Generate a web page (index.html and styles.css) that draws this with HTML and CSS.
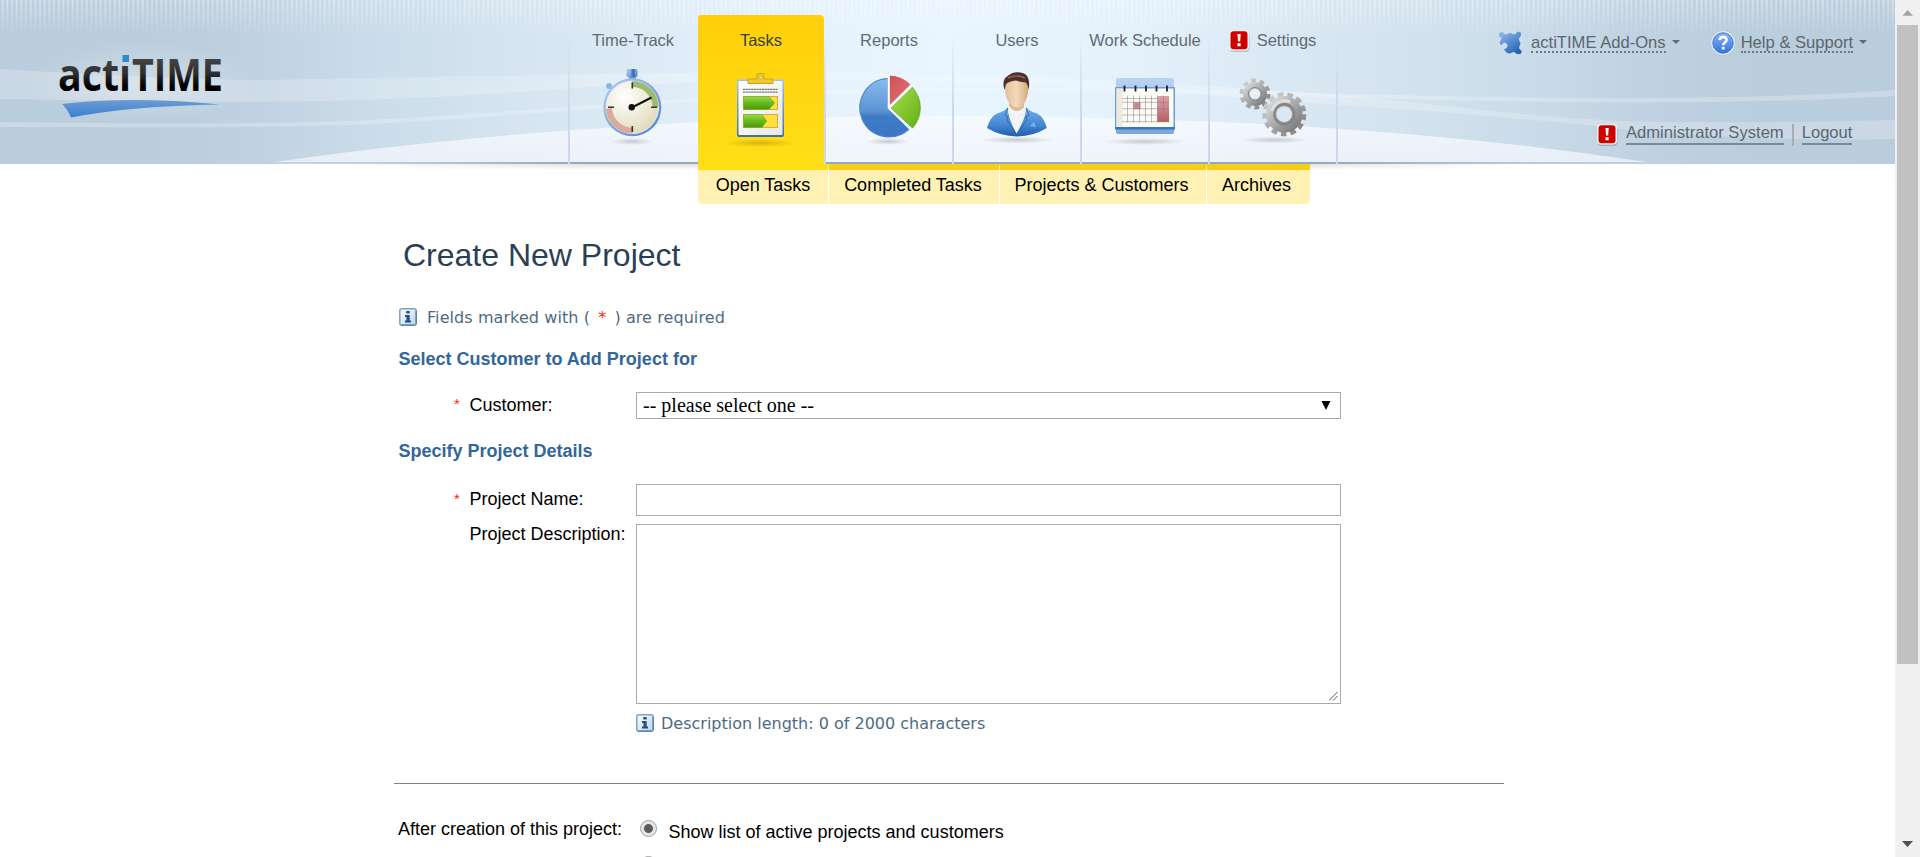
FILE: index.html
```html
<!DOCTYPE html>
<html lang="en">
<head>
<meta charset="utf-8">
<title>actiTIME - Create New Project</title>
<link rel="stylesheet" href="styles.css">
</head>
<body>
<div class="viewport">
<div class="page">
  <header class="header">
    <svg class="header-bg" width="1895" height="172" viewBox="0 0 1895 172">
      <defs>
        <linearGradient id="sky"><stop offset="0" stop-color="#bacddd"/><stop offset=".09" stop-color="#bbcedd"/><stop offset=".14" stop-color="#c1d2e2"/><stop offset=".2" stop-color="#cbddea"/><stop offset=".3" stop-color="#d9e7f3"/><stop offset=".4" stop-color="#e4f1fc"/><stop offset=".5" stop-color="#e9f5ff"/><stop offset=".6" stop-color="#e4f1fb"/><stop offset=".7" stop-color="#d8e6f2"/><stop offset=".8" stop-color="#cbddea"/><stop offset=".86" stop-color="#c1d2e2"/><stop offset=".92" stop-color="#bbcedd"/><stop offset="1" stop-color="#bacddd"/></linearGradient>
        <linearGradient id="hill" x1="0" y1="0" x2="0" y2="1"><stop offset="0" stop-color="#f7fbff" stop-opacity=".85"/><stop offset="1" stop-color="#f3f5fa" stop-opacity=".75"/></linearGradient>
        <linearGradient id="edge"><stop offset="0" stop-color="#94aabd" stop-opacity="0"/><stop offset=".16" stop-color="#94aabd" stop-opacity="0"/><stop offset=".3" stop-color="#94aabd"/><stop offset=".7" stop-color="#94aabd"/><stop offset=".87" stop-color="#94aabd" stop-opacity="0"/><stop offset="1" stop-color="#94aabd" stop-opacity="0"/></linearGradient>
        <linearGradient id="drop" x1="0" y1="0" x2="0" y2="1"><stop offset="0" stop-color="#000" stop-opacity=".12"/><stop offset="1" stop-color="#000" stop-opacity="0"/></linearGradient>
        <linearGradient id="fade"><stop offset=".18" stop-color="#000"/><stop offset=".31" stop-color="#fff"/><stop offset=".69" stop-color="#fff"/><stop offset=".8" stop-color="#000"/></linearGradient>
        <linearGradient id="down" x1="0" y1="0" x2="0" y2="1"><stop offset="0" stop-color="#fff" stop-opacity=".38"/><stop offset="1" stop-color="#fff" stop-opacity="0"/></linearGradient>
        <pattern id="stripe" width="4.667" height="40" patternUnits="userSpaceOnUse"><rect x="1.5" width="2.3" height="34" fill="url(#down)"/></pattern>
        <mask id="m"><rect width="1895" height="172" fill="url(#fade)"/></mask>
        <radialGradient id="halo"><stop offset="0" stop-color="#fff" stop-opacity=".28"/><stop offset="1" stop-color="#fff" stop-opacity="0"/></radialGradient>
      </defs>
      <rect width="1895" height="164" fill="url(#sky)"/>
      <rect width="1895" height="34" fill="url(#stripe)"/>
      <path d="M0 69C100 75 180 79 250 80C350 79 450 76 560 75C700 72 800 72 900 74C1050 76 1200 84 1340 95C1450 104 1560 124 1700 122C1770 123 1840 121 1895 120V139C1800 141 1700 137 1620 129C1540 119 1440 112 1340 105C1200 94 1050 84 900 81C780 79 660 83 560 89C450 97 360 102 220 102C120 101 60 100 0 99Z" fill="#fff" fill-opacity=".22"/>
      <path d="M0 122C120 124 250 124 350 121C450 116 600 104 700 98C820 90 950 86 1080 88C1200 90 1300 93 1400 95C1560 99 1740 101 1895 90V96C1740 105 1560 103 1400 99C1300 96 1200 93 1080 91C950 89 820 93 700 101C600 108 450 121 350 125C250 128 120 127 0 127Z" fill="#fff" fill-opacity=".24"/>
      <path d="M275 162Q395 144 560 131C680 122 800 116 940 116C1080 117 1220 120 1340 129Q1500 140 1647 162Z" fill="url(#hill)"/>
      <rect y="162" width="1895" height="2" fill="url(#edge)"/>
      <rect y="164" width="1895" height="6" fill="url(#drop)" mask="url(#m)"/>
      <ellipse cx="140" cy="82" rx="115" ry="42" fill="url(#halo)"/>
    </svg>
    <div class="brand">
      <svg class="logo" width="200" height="110" viewBox="0 0 200 110" role="img" aria-label="actiTIME">
        <defs>
          <linearGradient id="ink" gradientUnits="userSpaceOnUse" x1="0" y1="39" x2="0" y2="71"><stop offset="0" stop-color="#444"/><stop offset=".45" stop-color="#2e2e2e"/><stop offset=".85" stop-color="#000"/></linearGradient>
          <linearGradient id="swoosh" x1="0" y1="0" x2="0" y2="1"><stop offset="0" stop-color="#6d9bd2"/><stop offset="1" stop-color="#377fd2"/></linearGradient>
        </defs>
        <text class="logo-text" x="18" y="71" textLength="73" lengthAdjust="spacingAndGlyphs" fill="url(#ink)">actı</text>
        <text class="logo-text" x="92" y="71" textLength="91" lengthAdjust="spacingAndGlyphs" fill="url(#ink)">TIME</text>
        <rect x="82.500" y="35" width="6.500" height="7" fill="#2e8bcb"/>
        <path d="M22 84Q90 76 180 84.500Q90 86 31 97.500Q28 90 22 84Z" fill="url(#swoosh)"/>
      </svg>
    </div>
    <nav class="tabs">
      <a class="tab"><span class="tab-label">Time-Track</span>
        <svg width="126" height="92" viewBox="0 0 126 92">
          <defs>
            <radialGradient id="shade"><stop offset="0" stop-color="#000" stop-opacity=".18"/><stop offset="1" stop-color="#000" stop-opacity="0"/></radialGradient>
            <radialGradient id="dial" cx=".35" cy=".3" r=".8"><stop offset="0" stop-color="#fff"/><stop offset="1" stop-color="#ddd9b4"/></radialGradient>
            <linearGradient id="rim" x1="0" y1="0" x2="1" y2="1"><stop offset="0" stop-color="#b4d0f5"/><stop offset="1" stop-color="#4d80c8"/></linearGradient>
          </defs>
          <ellipse cx="62" cy="81.500" rx="22" ry="3.500" fill="url(#shade)"/>
          <rect x="59" y="15" width="7" height="5" fill="#6a92c8"/>
          <rect x="56.500" y="9" width="11" height="8" rx="1.500" fill="url(#rim)"/><path d="M61.500 9h3.500v8h-3.500z" fill="#3f74b8"/>
          <path d="M39 25l4 5" stroke="#8fb4e6" stroke-width="4"/><circle cx="39" cy="26" r="3" fill="#8fb5e8"/>
          <circle cx="62.300" cy="47.300" r="29" fill="url(#rim)"/><circle cx="62.300" cy="47.300" r="26.300" fill="url(#dial)" stroke="#e8eef6"/>
          <path d="M62.300 24A23.300 23.300 0 0 1 85.600 47.300" fill="none" stroke="#9dba70" stroke-width="6"/>
          <path d="M62.300 70.600A23.300 23.300 0 0 1 39 48.500" fill="none" stroke="#dca99a" stroke-width="6"/>
          <path d="M62.300 22.500v6M62.300 66v6M38 47.300h6M81 47.300h6" stroke="#333" stroke-width="1.600"/>
          <path d="M60 48.500L81.500 37.500" stroke="#111" stroke-width="2"/><circle cx="61.700" cy="47.300" r="3.200" fill="#111"/>
        </svg></a>
      <a class="tab tab-active"><span class="tab-label">Tasks</span>
        <svg width="126" height="92" viewBox="0 0 126 92">
          <defs>
            <linearGradient id="bar" x1="0" y1="0" x2="0" y2="1"><stop offset="0" stop-color="#9bdc4c"/><stop offset=".5" stop-color="#66ba1a"/><stop offset="1" stop-color="#47980c"/></linearGradient>
            <linearGradient id="board" x1="0" y1="0" x2="0" y2="1"><stop offset="0" stop-color="#9fc3ec"/><stop offset="1" stop-color="#3f6da5"/></linearGradient>
            <linearGradient id="sheet" x1="0" y1="0" x2="1" y2="1"><stop offset="0" stop-color="#fff"/><stop offset="1" stop-color="#e9e9e2"/></linearGradient>
          </defs>
          <ellipse cx="62" cy="83" rx="36" ry="4" fill="url(#shade)"/>
          <rect x="39" y="19.500" width="47" height="57.500" rx="2" fill="url(#board)"/><rect x="40.500" y="21" width="44" height="54" rx="1" fill="url(#sheet)"/>
          <path d="M50 19h9v-4.500q0-1 1-1h5q1 0 1 1v4.500h9v4.500H50z" fill="#edc937" stroke="#d0a31c"/><circle cx="62.500" cy="17.500" r="1.500" fill="#fff3a0" stroke="#c79d1c" stroke-width=".7"/>
          <path d="M45 29.300h35M45 32.200h35" stroke="#777" stroke-width="1.200" stroke-dasharray="2.200 .5"/>
          <rect x="45.500" y="36.500" width="34" height="13" fill="#ffdf3b" stroke="#cfae3e"/><path d="M45.500 36.500H71L76.500 43L71 49.500H45.500z" fill="url(#bar)" stroke="#8ea832" stroke-width=".8"/>
          <rect x="45.500" y="54.500" width="34" height="13" fill="#ffdf3b" stroke="#cfae3e"/><path d="M45.500 54.500H64L68.700 61L64 67.500H45.500z" fill="url(#bar)" stroke="#8ea832" stroke-width=".8"/>
        </svg></a>
      <a class="tab"><span class="tab-label">Reports</span>
        <svg width="126" height="92" viewBox="0 0 126 92">
          <defs>
            <linearGradient id="pieb" x1="0" y1="0" x2="0" y2="1"><stop offset="0" stop-color="#8bbbf0"/><stop offset=".55" stop-color="#5b94d6"/><stop offset=".65" stop-color="#3f7cc6"/><stop offset="1" stop-color="#3a76c4"/></linearGradient>
            <linearGradient id="pier" x1="0" y1="0" x2="1" y2="1"><stop offset="0" stop-color="#cf5158"/><stop offset="1" stop-color="#e07678"/></linearGradient>
            <linearGradient id="pieg" x1="0" y1="0" x2="1" y2="1"><stop offset="0" stop-color="#a9e04e"/><stop offset="1" stop-color="#62ad13"/></linearGradient>
          </defs>
          <ellipse cx="62" cy="81.500" rx="22" ry="3.500" fill="url(#shade)"/>
          <path d="M62 48V18.500A29.200 29.200 0 1 0 83.500 68.500Z" fill="url(#pieb)" stroke="#4d85cb" stroke-width="1.200"/>
          <path d="M63.300 46V15A31 31 0 0 1 85 24.600Z" fill="url(#pier)" stroke="#fff" stroke-width=".8"/>
          <path d="M65 48L86 27A30 30 0 0 1 86.500 68Z" fill="url(#pieg)" stroke="#55a00e" stroke-width=".7"/>
          <path d="M62.500 16V48L84 69M63 48.300L86 26" stroke="#fff" fill="none" stroke-width="1.700"/>
        </svg></a>
      <a class="tab"><span class="tab-label">Users</span>
        <svg width="126" height="92" viewBox="0 0 126 92">
          <defs>
            <linearGradient id="suit" x1="0" y1="0" x2="0" y2="1"><stop offset="0" stop-color="#72b0f0"/><stop offset=".6" stop-color="#4587d2"/><stop offset="1" stop-color="#1f5fae"/></linearGradient>
            <linearGradient id="skin"><stop offset="0" stop-color="#dfc19d"/><stop offset=".5" stop-color="#f3d9ba"/><stop offset="1" stop-color="#d3ac80"/></linearGradient>
          </defs>
          <ellipse cx="63" cy="80" rx="37" ry="3.500" fill="url(#shade)"/>
          <path d="M55 40h15v14l-7 8l-8-8z" fill="#e0bb91"/>
          <path d="M53.500 48L62 71L72.500 48L71 46Q63 56 55 46Z" fill="#f2f6f8"/>
          <path d="M54 47Q53 55 62.500 74Q73 55 72 47Q75 51 83 53.500Q90 57 92.800 68Q80 76 63 76.500Q46 76 33 68Q36 57 43 53.500Q51 51 54 47Z" fill="url(#suit)"/>
          <path d="M54.500 49Q57 53 60.500 54L62.500 71L65 54Q69 53 71.500 49Q72 57 62.500 73Q53.500 57 54.500 49Z" fill="#eef3f6"/>
          <path d="M54 48l-3 7 3 2-1 3 9.500 14M72 48l3 7-3 2 1 3-10.500 14" fill="none" stroke="#2f68ad" stroke-width=".9"/>
          <path d="M76 66l4-4 2 5z" fill="#7db2ea"/>
          <path d="M51 25Q51 18 62 18Q74 18 74 26Q75 38 69 45Q63 50 57 45Q50 38 51 25Z" fill="url(#skin)"/>
          <path d="M50.500 30Q47.500 20 53 16.500Q60 10 70 13.500Q77 17 74.500 30Q74 25 72 22.500Q66 22 62 20.500Q55 21 52 24Z" fill="#4e302b"/>
          <path d="M54 18Q63 14 71 18" stroke="#8c655d" fill="none" stroke-width="1.600"/>
        </svg></a>
      <a class="tab"><span class="tab-label">Work Schedule</span>
        <svg width="126" height="92" viewBox="0 0 126 92">
          <defs>
            <linearGradient id="cal" x1="0" y1="0" x2="0" y2="1"><stop offset="0" stop-color="#b9d5f3"/><stop offset="1" stop-color="#7aa7da"/></linearGradient>
            <linearGradient id="redcol" x1="0" y1="0" x2="0" y2="1"><stop offset="0" stop-color="#dba2a8"/><stop offset="1" stop-color="#bd5c62"/></linearGradient>
          </defs>
          <ellipse cx="63" cy="81.500" rx="42" ry="3.500" fill="url(#shade)"/>
          <rect x="34" y="18" width="58" height="56" rx="2" fill="url(#cal)"/>
          <rect x="33" y="27" width="60" height="42" rx="1" fill="#6e9bd2"/><path d="M33 67h60v2.500H33z" fill="#4275b3"/><rect x="34.500" y="28.500" width="57" height="38.500" fill="#fafaf7"/>
          <path d="M34.500 28.500h6v38.500h-6z" fill="#eceadc"/>
          <rect x="75.300" y="36" width="11.700" height="26" fill="url(#redcol)"/><rect x="51.500" y="42.300" width="7" height="7" fill="#cf868c"/>
          <path d="M40 38.500h35M40 42.300h47M40 48.700h47M40 55h47M40 61.700h47M45.500 35.500v27M51.500 35.500v27M57.500 35.500v27M63.500 35.500v27M69.500 35.500v27M75.500 35.500v27M81.500 35.500v27" stroke="#8d7f80" stroke-width=".8" stroke-opacity=".65"/>
          <path d="M42.500 25.500v6M53.500 25.500v6M64 25.500v6M74.500 25.500v6M85 25.500v6" stroke="#222" stroke-width="1.800"/>
        </svg></a>
      <a class="tab"><span class="tab-label"><svg class="alert" width="22" height="24" viewBox="0 0 22 24"><rect x="1.500" y="3" width="20" height="20" rx="4" fill="#000" opacity=".18"/><rect x="1" y="1" width="20" height="20.500" rx="4" fill="#f6f3f3"/><rect x="2.500" y="2.300" width="17" height="18" rx="3" fill="#cf0000"/><path d="M9.500 5h3.200l-.5 7.500h-2.200zM9.500 14.200h3.200v3h-3.200z" fill="#fff"/></svg>Settings</span>
        <svg width="126" height="92" viewBox="0 0 126 92">
          <defs><linearGradient id="steel" x1="0" y1="0" x2="1" y2="1"><stop offset="0" stop-color="#d6d6d6"/><stop offset="1" stop-color="#7c7c7c"/></linearGradient></defs>
          <ellipse cx="64" cy="80" rx="34" ry="3.500" fill="url(#shade)"/>
          <g fill="none" stroke="url(#steel)">
            <circle cx="45" cy="34" r="13.500" stroke-width="4" stroke-dasharray="4.700 3.782"/>
            <circle cx="45" cy="34" r="8.700" stroke-width="6.500"/>
            <circle cx="74.300" cy="54.300" r="19.800" stroke-width="4.500" stroke-dasharray="5.600 3.970"/>
            <circle cx="74.300" cy="54.300" r="13" stroke-width="10.500"/>
          </g>
          <circle cx="45" cy="34" r="6.500" fill="none" stroke="#888" stroke-width="1"/>
          <circle cx="74.300" cy="54.300" r="10" fill="none" stroke="#858585" stroke-width="2.400"/>
          <path d="M62 51A13 13 0 0 1 80 42" fill="none" stroke="#e0e0e0" stroke-width="3"/>
        </svg></a>
      <span class="tab-end"></span>
    </nav>
    <div class="tools">
      <div class="tool-row tool-top">
        <svg class="puzzle" width="26" height="26" viewBox="0 0 26 26">
          <defs><linearGradient id="pz" x1="0" y1="0" x2=".7" y2="1"><stop offset="0" stop-color="#9cc0f0"/><stop offset=".5" stop-color="#5f92d4"/><stop offset="1" stop-color="#2562ad"/></linearGradient></defs>
          <path d="M4 1.500Q7 1 7.500 3.500Q9 4.500 10.500 3.500Q13 1 16 3.500Q17.500 4.500 18.500 3.500Q19 .8 22 1Q25.500 2 24.500 5Q24 7 22.500 8Q22 9.500 23 11Q25 13.500 23 16Q22 17.500 23 19Q25.500 20 25 22.500Q24 25.500 21 24.500Q19 24.500 18 23Q16.500 22 15 23Q12.500 25 9.500 23L5.500 18.500Q9 19.500 10 16.500Q10.500 13.500 7.500 13Q5 13.500 5.500 16.500L3 14.500Q1 12.500 3 10.500Q4.500 9 3.500 7.500Q1.500 7 1.200 5Q1.200 2 4 1.500Z" fill="url(#pz)" stroke="#dfeaf5" stroke-width=".8"/>
        </svg>
        <a class="dotted">actiTIME Add-Ons</a><i class="caret"></i>
        <svg class="help" width="24" height="24" viewBox="0 0 24 24">
          <defs><linearGradient id="hp" x1="0" y1="0" x2="0" y2="1"><stop offset="0" stop-color="#8fb6f2"/><stop offset="1" stop-color="#2f70e2"/></linearGradient></defs>
          <circle cx="12" cy="12" r="11" fill="url(#hp)" stroke="#e5eefb" stroke-width="1.500"/><circle cx="12" cy="12" r="10.200" fill="none" stroke="#4579cf"/>
          <path d="M8.700 9.200Q8.900 5.900 12.200 5.900Q15.500 6 15.500 9Q15.400 10.700 13.700 11.600Q12.300 12.400 12.200 14.200" fill="none" stroke="#fff" stroke-width="2.600"/><rect x="10.800" y="15.800" width="2.800" height="2.700" fill="#fff"/>
        </svg>
        <a class="dotted">Help &amp; Support</a><i class="caret"></i>
      </div>
      <div class="tool-row tool-bottom">
        <svg class="alert" width="22" height="24" viewBox="0 0 22 24"><rect x="1.500" y="3" width="20" height="20" rx="4" fill="#000" opacity=".18"/><rect x="1" y="1" width="20" height="20.500" rx="4" fill="#f6f3f3"/><rect x="2.500" y="2.300" width="17" height="18" rx="3" fill="#cf0000"/><path d="M9.500 5h3.200l-.5 7.500h-2.200zM9.500 14.200h3.200v3h-3.200z" fill="#fff"/></svg>
        <a class="solid">Administrator System</a><i class="divider"></i><a class="solid">Logout</a>
      </div>
    </div>
  </header>
  <nav class="submenu">
    <a class="sub sub-open">Open Tasks</a><a class="sub sub-done">Completed Tasks</a><a class="sub sub-projects">Projects &amp; Customers</a><a class="sub sub-archives">Archives</a>
  </nav>
  <main class="content">
    <h1 class="title">Create New Project</h1>
    <div class="note note-required">
      <svg class="info" width="18" height="18" viewBox="0 0 18 18"><defs><linearGradient id="inf" x1="0" y1="0" x2="1" y2="1"><stop offset="0" stop-color="#fff"/><stop offset="1" stop-color="#b9d3e8"/></linearGradient></defs><rect x=".8" y=".8" width="16.400" height="16.400" rx="2" fill="url(#inf)" stroke="#7da3c4" stroke-width="1.500"/><path d="M2 17.200h14.500M17.200 3v13" stroke="#587fa5" stroke-width="1.300"/><path d="M7.300 3h3.400v2.600H7.300zM6 7h4.700v5.500H12V14.500H6v-2h1.500V9H6z" fill="#1e5288"/></svg>
      <span class="required-text">Fields marked with ( <b class="star">*</b> ) are required</span>
    </div>
    <h2 class="section">Select Customer to Add Project for</h2>
    <div class="row row-customer"><span class="mark">*</span><label class="label">Customer:</label>
      <div class="field select"><span>-- please select one --</span><svg width="10" height="9" viewBox="0 0 10 9"><path d="M.5 0h9L5 9z"/></svg></div></div>
    <h2 class="section section-details">Specify Project Details</h2>
    <div class="row row-name"><span class="mark">*</span><label class="label">Project Name:</label><input class="field name" type="text"></div>
    <div class="row row-desc"><span class="mark"></span><label class="label">Project Description:</label><div class="field area"><svg width="9" height="9" viewBox="0 0 9 9"><path d="M0 8.500L8.500 0M4 8.500L8.500 4" stroke="#555" stroke-width="1"/></svg></div></div>
    <div class="note note-length">
      <svg class="info" width="18" height="18" viewBox="0 0 18 18"><rect x=".8" y=".8" width="16.400" height="16.400" rx="2" fill="url(#inf)" stroke="#7da3c4" stroke-width="1.500"/><path d="M2 17.200h14.500M17.200 3v13" stroke="#587fa5" stroke-width="1.300"/><path d="M7.300 3h3.400v2.600H7.300zM6 7h4.700v5.500H12V14.500H6v-2h1.500V9H6z" fill="#1e5288"/></svg>
      <span class="length-text">Description length: 0 of 2000 characters</span>
    </div>
    <div class="rule"></div>
    <div class="after"><span class="after-label">After creation of this project:</span>
      <div class="options"><div class="option"><i class="radio radio-on"></i><span class="option-text">Show list of active projects and customers</span></div><div class="option"><i class="radio"></i></div></div></div>
  </main>
</div>
<aside class="scrollbar"><svg width="25" height="25" viewBox="0 0 25 25"><path d="M7.500 15.800h10.500L12.700 10z" fill="#a3a3a3"/></svg><div class="thumb"></div><svg class="down" width="25" height="25" viewBox="0 0 25 25"><path d="M7 9h11l-5.500 6z" fill="#505050"/></svg></aside>
</div>
</body>
</html>
```

FILE: styles.css
```css
* { box-sizing: border-box; }
body { margin: 0; background: #fff; color: #000; font-family: "Liberation Sans", Arial, sans-serif; font-size: 18px; overflow: hidden; }
svg { display: block; flex: none; }
.viewport { display: flex; height: 857px; overflow: hidden; }
.page { width: 1895px; height: 857px; overflow: hidden; }

.header { position: relative; display: flex; height: 164px; }
.header-bg { position: absolute; left: 0; top: 0; }
.brand, .tabs, .tools { position: relative; }
.brand { width: 568px; padding: 20px 0 0 40px; }
.logo { overflow: visible; }
.logo-text { font-family: "Open Sans", "Noto Sans", sans-serif; font-weight: 700; font-size: 44px; }

.tabs { display: flex; }
.tab { width: 128px; height: 164px; padding-top: 30px; border-left: 2px solid; border-image: linear-gradient(rgba(200,214,236,0) 20%, #cdd8ee 65%) 1; }
.tab-label { display: flex; align-items: center; justify-content: center; gap: 8px; height: 20px; margin-bottom: 10px; font-size: 16.5px; color: #5f6b75; white-space: nowrap; }
.tab-label .alert { margin-top: 2px; margin-left: -2px; margin-right: -1px; }
.tab-active { height: 149px; margin-top: 15px; padding-top: 15px; background: linear-gradient(#ffcf0b, #ffde18) padding-box; border-image: none; border-color: transparent; border-radius: 4px 4px 0 0; }
.tab-active .tab-label { color: #3a3f38; }
.tab-end { width: 2px; background: linear-gradient(rgba(200,214,236,0) 20%, #cdd8ee 65%); }

.tools { width: 557px; color: #5b6670; font-size: 16.6px; }
.tool-row { display: flex; align-items: center; position: relative; }
.tool-top { height: 26px; margin: 30px 0 0 159px; }
.dotted { height: 20px; line-height: 19px; margin-top: -1px; border-bottom: 2px dotted #6d7882; white-space: nowrap; }
.puzzle { margin-right: 8px; }
.caret { margin: -2px 0 0 6px; border: 4px solid transparent; border-top-color: #5f6b75; border-bottom: 0; }
.help { margin: 0 6px 0 31px; }
.tool-bottom { height: 24px; margin: 67px 0 0 258px; }
.tool-bottom .alert { margin-right: 8px; }
.solid { height: 21px; line-height: 18px; margin-top: -1px; border-bottom: 2px solid #7b8896; white-space: nowrap; }
.divider { width: 2px; height: 22px; margin: 0 8px; background: #aaaeb3; }

.submenu { position: relative; display: flex; height: 40px; margin-left: 698px; font-size: 18px; }
.sub { border-top: 6px solid #f3d016; border-right: 1px solid #fff; background: #fff1b4; text-align: center; line-height: 30px; white-space: nowrap; }
.sub-open { width: 131px; border-top-color: #ffde18; border-radius: 0 0 0 4px; }
.sub-done { width: 171px; padding-right: 2px; }
.sub-projects { width: 207px; padding-right: 3px; }
.sub-archives { width: 103px; padding-right: 4px; border-right: 0; border-radius: 0 0 4px 0; }

.content { width: 1110px; margin-left: 394px; padding-top: 31px; }
.title { margin: 0 0 32px 9px; height: 40px; line-height: 40px; font-size: 32px; font-weight: 400; color: #2b3f57; }
.note { display: flex; align-items: center; height: 20px; color: #4f6a84; font-family: "DejaVu Sans", Verdana, sans-serif; font-size: 16px; white-space: nowrap; }
.note-required { margin: 0 0 22px 5px; gap: 10px; }
.star { margin: 0 3px 0 3px; color: #f42a10; font-weight: 400; }
.required-text { letter-spacing: .08px; }
.section { margin: 0 0 23px 4.5px; height: 20px; line-height: 20px; font-size: 18px; color: #336699; }
.section-details { margin-top: 22px; }
.row { display: flex; }
.mark { width: 15.5px; margin-left: 60px; color: #f42a10; font-size: 15px; line-height: 24px; }
.label { width: 166.5px; white-space: nowrap; line-height: 26px; }
.field { width: 705px; border: 1px solid #a9a9a9; background: #fff; }
.select { display: flex; align-items: center; justify-content: space-between; height: 27px; padding: 0 9px 0 6px; font-family: "Liberation Serif", "Times New Roman", serif; font-size: 20px; line-height: 25px; }
.name { height: 32px; padding: 0; }
.row-name .label, .row-name .mark { line-height: 30px; }
.row-desc { margin-top: 8px; }
.row-desc .label { line-height: 20px; }
.area { display: flex; align-items: flex-end; justify-content: flex-end; height: 180px; padding: 2px; }
.note-length { margin: 9px 0 50px 242px; gap: 7px; }
.rule { height: 1px; background: #808080; }
.after { display: flex; padding-left: 4px; }
.after-label { width: 242px; padding-top: 34px; line-height: 22px; }
.options { padding-top: 36px; }
.option { display: flex; height: 36px; gap: 11.5px; }
.option-text { line-height: 24px; }
.radio { width: 17px; height: 17px; border: 1px solid #a0a0a0; border-radius: 50%; background: linear-gradient(#f5f5f5, #dedede); }
.radio-on { background: radial-gradient(circle, #5c5c5c 4px, #e6e6e6 5px); }

.scrollbar { display: flex; flex-direction: column; width: 25px; background: #f0f0f0; }
.thumb { height: 639px; margin: 0 2px; background: #c1c1c1; }
.down { margin-top: auto; }
```
